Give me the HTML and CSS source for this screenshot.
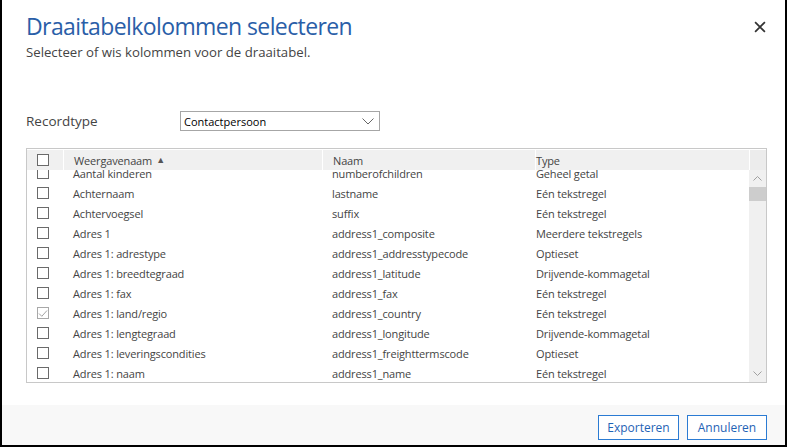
FILE: index.html
```html
<!DOCTYPE html>
<html>
<head>
<meta charset="utf-8">
<link rel="stylesheet" href="styles.css">
</head>
<body>
<div class="dialog">
  <div class="main">
    <div class="head">
      <div class="titles">
        <h1 class="title">Draaitabelkolommen selecteren</h1>
        <p class="subtitle">Selecteer of wis kolommen voor de draaitabel.</p>
      </div>
      <button class="close" aria-label="Sluiten">
        <svg width="11" height="11" viewBox="0 0 11 11"><path d="M1 1 L10 10 M10 1 L1 10" stroke="#333" stroke-width="1.6" fill="none"/></svg>
      </button>
    </div>
    <div class="field">
      <label class="field-label">Recordtype</label>
      <div class="select">
        <span>Contactpersoon</span>
        <svg width="12" height="7" viewBox="0 0 12 7"><path d="M0.5 0.5 L6 6 L11.5 0.5" stroke="#666" stroke-width="1" fill="none"/></svg>
      </div>
    </div>
    <div class="grid">
      <div class="grid-head">
        <div class="c-check"><span class="box"></span></div>
        <div class="c-name sep">Weergavenaam <span class="sort">&#9650;</span></div>
        <div class="c-naam sep">Naam</div>
        <div class="c-type sep">Type</div>
        <div class="c-sb sep"></div>
      </div>
      <div class="grid-body">
        <div class="rows-view">
          <div class="rows">
            <div class="row"><div class="c-check"><span class="box"></span></div><div class="c-name">Aantal kinderen</div><div class="c-naam">numberofchildren</div><div class="c-type">Geheel getal</div></div>
            <div class="row"><div class="c-check"><span class="box"></span></div><div class="c-name">Achternaam</div><div class="c-naam">lastname</div><div class="c-type">Eén tekstregel</div></div>
            <div class="row"><div class="c-check"><span class="box"></span></div><div class="c-name">Achtervoegsel</div><div class="c-naam">suffix</div><div class="c-type">Eén tekstregel</div></div>
            <div class="row"><div class="c-check"><span class="box"></span></div><div class="c-name">Adres 1</div><div class="c-naam">address1_composite</div><div class="c-type">Meerdere tekstregels</div></div>
            <div class="row"><div class="c-check"><span class="box"></span></div><div class="c-name">Adres 1: adrestype</div><div class="c-naam">address1_addresstypecode</div><div class="c-type">Optieset</div></div>
            <div class="row"><div class="c-check"><span class="box"></span></div><div class="c-name">Adres 1: breedtegraad</div><div class="c-naam">address1_latitude</div><div class="c-type">Drijvende-kommagetal</div></div>
            <div class="row"><div class="c-check"><span class="box"></span></div><div class="c-name">Adres 1: fax</div><div class="c-naam">address1_fax</div><div class="c-type">Eén tekstregel</div></div>
            <div class="row"><div class="c-check"><span class="box checked"><svg width="10" height="9" viewBox="0 0 10 9"><path d="M1 4.5 L3.8 7.3 L9 1.5" stroke="#999" stroke-width="0.9" fill="none"/></svg></span></div><div class="c-name">Adres 1: land/regio</div><div class="c-naam">address1_country</div><div class="c-type">Eén tekstregel</div></div>
            <div class="row"><div class="c-check"><span class="box"></span></div><div class="c-name">Adres 1: lengtegraad</div><div class="c-naam">address1_longitude</div><div class="c-type">Drijvende-kommagetal</div></div>
            <div class="row"><div class="c-check"><span class="box"></span></div><div class="c-name">Adres 1: leveringscondities</div><div class="c-naam">address1_freighttermscode</div><div class="c-type">Optieset</div></div>
            <div class="row"><div class="c-check"><span class="box"></span></div><div class="c-name">Adres 1: naam</div><div class="c-naam">address1_name</div><div class="c-type">Eén tekstregel</div></div>
          </div>
        </div>
        <div class="scrollbar">
          <div class="sb-btn"><svg width="9" height="5" viewBox="0 0 9 5"><path d="M0.5 4.5 L4.5 0.5 L8.5 4.5" stroke="#a0a0a0" stroke-width="1" fill="none"/></svg></div>
          <div class="sb-thumb"></div>
          <div class="sb-track"></div>
          <div class="sb-btn"><svg width="9" height="5" viewBox="0 0 9 5"><path d="M0.5 0.5 L4.5 4.5 L8.5 0.5" stroke="#a0a0a0" stroke-width="1" fill="none"/></svg></div>
        </div>
      </div>
    </div>
  </div>
  <div class="footer">
    <button class="btn">Exporteren</button>
    <button class="btn">Annuleren</button>
  </div>
</div>
</body>
</html>
```

FILE: styles.css
```css
* { box-sizing: border-box; }
html, body { margin: 0; padding: 0; background: #fff; }
body { font-family: "Segoe UI", "Open Sans", "Noto Sans", sans-serif; color: #444; }

.dialog {
  width: 787px;
  height: 447px;
  border-left: 2px solid #000;
  border-right: 2px solid #000;
  border-bottom: 2px solid #000;
  display: flex;
  flex-direction: column;
}

.main {
  height: 405px;
  padding: 0 18px 0 24px;
  display: flex;
  flex-direction: column;
}

.head {
  display: flex;
  justify-content: space-between;
  align-items: flex-start;
}
.title {
  margin: 10px 0 0;
  font-weight: normal;
  font-size: 23px;
  line-height: 32px;
  color: #2a5ea8;
  letter-spacing: -0.6px;
}
.subtitle {
  margin: 1px 0 0;
  font-size: 13.2px;
  line-height: 18px;
  color: #444;
}
.close {
  margin: 21px 1px 0 0;
  padding: 0;
  border: 0;
  background: none;
  width: 12px;
  height: 12px;
  display: flex;
}
.close svg { width: 12px; height: 12px; }

.field {
  display: flex;
  align-items: center;
  margin-top: 50px;
  height: 20px;
}
.field-label {
  width: 154px;
  font-size: 13.5px;
  color: #444;
}
.select {
  width: 200px;
  height: 20px;
  border: 1px solid #a6a6a6;
  display: flex;
  align-items: center;
  justify-content: space-between;
  padding: 0 5px 0 3px;
  font-size: 11px;
  color: #000;
}

.grid {
  margin-top: 17px;
  width: 741px;
  height: 235px;
  border: 1px solid #c8c8c8;
  padding-top: 1px;
  display: flex;
  flex-direction: column;
  font-size: 11px;
  letter-spacing: -0.15px;
}
.grid-head {
  display: flex;
  height: 20px;
  background: #f0f0f0;
  color: #444;
  align-items: stretch;
}
.grid-head > div { display: flex; align-items: center; }
.grid-head .sep { border-left: 1px solid #fff; }
.sort { font-size: 9px; color: #555; margin-left: 4px; position: relative; top: -1px; }

.c-check { width: 36px; display: flex; align-items: center; padding-left: 10px; flex: none; }
.c-name { width: 259px; padding-left: 10px; flex: none; }
.c-naam { width: 213px; padding-left: 10px; flex: none; }
.c-type { width: 214px; padding-left: 0; flex: none; }
.c-sb { flex: 1; background: #ececec; }

.box {
  width: 12px;
  height: 12px;
  border: 1px solid #6a6a6a;
  background: #fff;
  display: flex;
  align-items: center;
  justify-content: center;
}
.box.checked { border-color: #a8a8a8; }

.grid-body {
  flex: 1;
  display: flex;
  min-height: 0;
}
.rows-view {
  flex: 1;
  overflow: hidden;
}
.rows { margin-top: -7px; }
.row {
  display: flex;
  height: 20px;
  align-items: center;
  color: #444;
}
.row .c-type { padding-left: 1px; }

.scrollbar {
  width: 17px;
  background: #f0f0f0;
  display: flex;
  flex-direction: column;
}
.sb-btn {
  height: 17px;
  display: flex;
  align-items: center;
  justify-content: center;
}
.sb-thumb { height: 14px; background: #cdcdcd; }
.sb-track { flex: 1; }

.footer {
  flex: 1;
  background: #f8f8f8;
  display: flex;
  justify-content: flex-end;
  align-items: flex-start;
  gap: 8px;
  padding: 10px 18px 0 0;
}
.btn {
  height: 25px;
  width: 81px;
  border: 1px solid #2b7bd3;
  background: #fff;
  color: #1f63b5;
  font-family: inherit;
  font-size: 12px;
  padding: 0;
}
.btn + .btn { width: 80px; }
```
